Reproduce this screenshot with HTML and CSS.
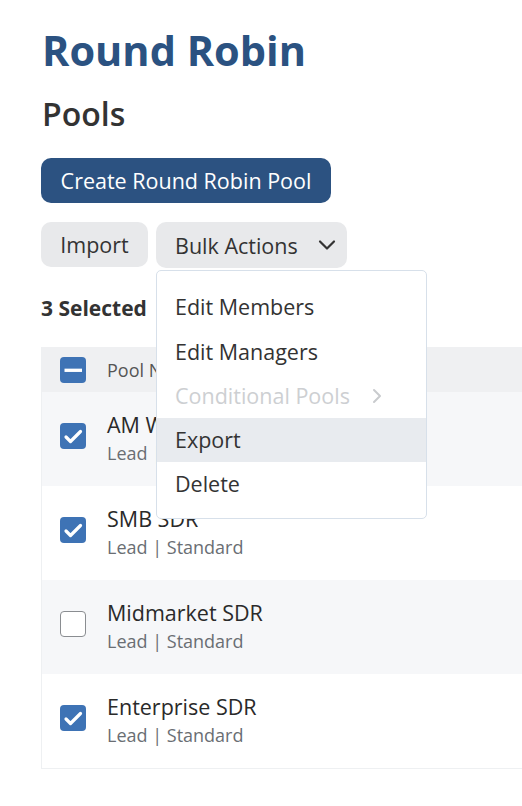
FILE: index.html
```html
<!DOCTYPE html>
<html>
<head>
<meta charset="utf-8">
<link rel="stylesheet" href="styles.css">
</head>
<body>
<div class="page">
  <h1 class="title">Round Robin</h1>
  <h2 class="subtitle">Pools</h2>
  <button class="btn btn-primary">Create Round Robin Pool</button>
  <div class="actions">
    <button class="btn btn-light">Import</button>
    <div class="bulk">
      <button class="btn btn-light btn-bulk">Bulk Actions
        <svg class="chev" width="18" height="12" viewBox="0 0 18 12"><path d="M2 2.5 L9 9.5 L16 2.5" fill="none" stroke="#333" stroke-width="2.2" stroke-linecap="round" stroke-linejoin="round"/></svg>
      </button>
      <div class="menu">
        <div class="item">Edit Members</div>
        <div class="item">Edit Managers</div>
        <div class="item disabled">Conditional Pools
          <svg class="chev-r" width="10" height="16" viewBox="0 0 10 16"><path d="M2 2 L8 8 L2 14" fill="none" stroke="#c9cbce" stroke-width="2" stroke-linecap="round" stroke-linejoin="round"/></svg>
        </div>
        <div class="item active">Export</div>
        <div class="item">Delete</div>
      </div>
    </div>
  </div>
  <div class="selected">3 Selected</div>
  <div class="table">
    <div class="head">
      <span class="cb cb-on"><svg width="26" height="26" viewBox="0 0 26 26"><path d="M4.5 13.3 H22" stroke="#fff" stroke-width="3.3"/></svg></span>
      <span class="head-label">Pool Name</span>
    </div>
    <div class="row alt">
      <span class="cb cb-on"><svg width="26" height="26" viewBox="0 0 26 26"><path d="M6 14 L10.5 18.5 L20.5 8.5" fill="none" stroke="#fff" stroke-width="3.2" stroke-linecap="round" stroke-linejoin="round"/></svg></span>
      <div class="info"><div class="name">AM West SDR</div><div class="meta">Lead | Standard</div></div>
    </div>
    <div class="row">
      <span class="cb cb-on"><svg width="26" height="26" viewBox="0 0 26 26"><path d="M6 14 L10.5 18.5 L20.5 8.5" fill="none" stroke="#fff" stroke-width="3.2" stroke-linecap="round" stroke-linejoin="round"/></svg></span>
      <div class="info"><div class="name">SMB SDR</div><div class="meta">Lead | Standard</div></div>
    </div>
    <div class="row alt">
      <span class="cb cb-off"></span>
      <div class="info"><div class="name">Midmarket SDR</div><div class="meta">Lead | Standard</div></div>
    </div>
    <div class="row last">
      <span class="cb cb-on"><svg width="26" height="26" viewBox="0 0 26 26"><path d="M6 14 L10.5 18.5 L20.5 8.5" fill="none" stroke="#fff" stroke-width="3.2" stroke-linecap="round" stroke-linejoin="round"/></svg></span>
      <div class="info"><div class="name">Enterprise SDR</div><div class="meta">Lead | Standard</div></div>
    </div>
  </div>
</div>
</body>
</html>
```

FILE: styles.css
```css
* { box-sizing: border-box; }
html, body { margin: 0; padding: 0; background: #fff; }
body { font-family: "Open Sans", "Noto Sans", sans-serif; color: #333; overflow: hidden; }
.page { padding: 25px 0 0 41px; width: 522px; }
.title { margin: 0 0 0 1px; font-size: 41.5px; line-height: 50px; font-weight: 700; color: #2b5281; }
.subtitle { margin: 20px 0 0 1px; font-size: 32px; line-height: 37px; font-weight: 600; color: #333; }
.btn { font-family: inherit; font-size: 21.5px; border: none; border-radius: 10px; padding: 0 20px; height: 45px; line-height: 45px; cursor: pointer; }
.btn-primary { display: block; margin-top: 26px; width: 290px; background: #2c5281; color: #fff; padding: 0; text-align: center; }
.actions { display: flex; gap: 8px; margin-top: 19px; align-items: flex-start; }
.btn-light { background: #e8e9eb; color: #333; }
.actions > .btn-light { width: 107px; padding: 0; text-align: center; }
.bulk { position: relative; }
.btn-bulk { display: flex; align-items: center; width: 191px; height: 46px; padding: 0 0 0 19px; }
.chev { margin-left: 20px; }
.menu { position: absolute; top: 48px; left: 0; width: 271px; height: 249px; background: #fff; border: 1px solid #d7e0ea; border-radius: 5px; padding-top: 14px; z-index: 5; }
.item { height: 44px; line-height: 44px; padding-left: 18px; font-size: 21.5px; color: #333; display: flex; align-items: center; }
.item:nth-child(2) { height: 45px; }
.item.disabled { color: #cdcfd2; }
.chev-r { margin-left: 22px; }
.item.active { background: #e8ebef; }
.selected { margin-top: 27px; font-size: 21px; line-height: 27px; font-weight: 700; color: #333; }
.table { margin-top: 25px; width: 481px; border-left: 1px solid #eef0f2; border-bottom: 1px solid #eef0f2; }
.head { height: 45px; background: #eff0f2; display: flex; align-items: center; padding-left: 18px; }
.head-label { margin-left: 21px; font-size: 18px; color: #555; }
.cb { width: 26px; height: 26px; border-radius: 4px; flex: none; display: block; }
.cb svg { display: block; }
.cb-on { background: #3e73b5; }
.cb-off { background: #fff; border: 1.5px solid #8a8d91; }
.row { height: 94px; display: flex; align-items: flex-start; padding: 18px 0 0 18px; background: #fff; }
.row.alt { background: #f6f7f9; }
.row .cb { margin-top: 13px; }
.info { margin-left: 21px; }
.name { font-size: 21.5px; line-height: 30px; color: #2a2a2a; }
.meta { font-size: 18px; line-height: 27px; color: #6a6e73; }
```
